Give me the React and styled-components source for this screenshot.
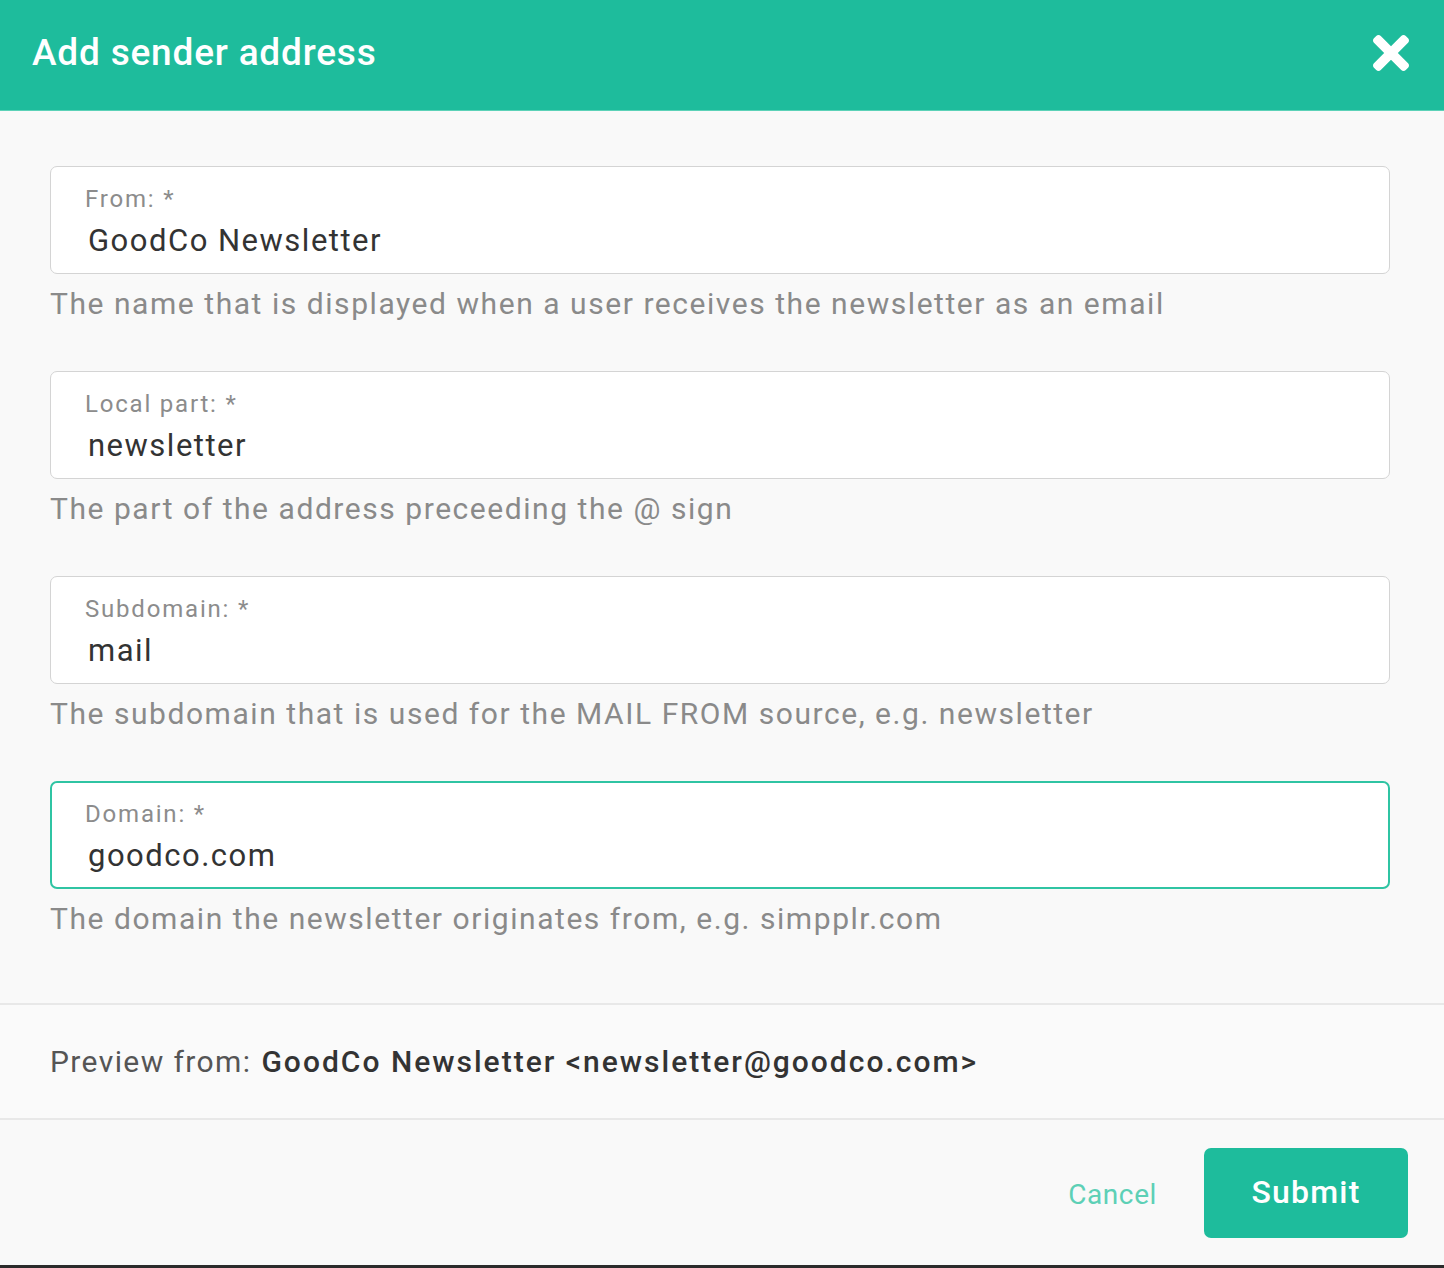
import React from "react";
import styled, { createGlobalStyle, css } from "styled-components";

const GlobalStyle = createGlobalStyle`
  html, body {
    margin: 0;
    padding: 0;
    background: #2b2b2b;
  }
  body {
    font-family: Roboto, "Liberation Sans", Arial, sans-serif;
  }
  * {
    box-sizing: border-box;
  }
`;

const Modal = styled.div`
  width: 1444px;
  height: 1265px;
  background: #f9f9f9;
  display: flex;
  flex-direction: column;
`;

const Header = styled.header`
  height: 111px;
  background: #1ebc9c;
  border-bottom: 1px solid #5cd2b8;
  display: flex;
  align-items: center;
  justify-content: space-between;
  padding: 0 34px 0 32px;
`;

const Title = styled.h2`
  margin: 0;
  color: #fff;
  font-size: 37px;
  font-weight: 500;
  letter-spacing: 0.8px;
  margin-top: -5px;
`;

const CloseButton = styled.button`
  border: none;
  background: none;
  padding: 0;
  width: 38px;
  height: 38px;
  display: flex;
  align-items: center;
  justify-content: center;
  cursor: pointer;
  margin-top: -4px;
`;

const Body = styled.div`
  padding: 55px 54px 64px 50px;
  display: flex;
  flex-direction: column;
  gap: 47px;
`;

const Field = styled.div`
  display: flex;
  flex-direction: column;
`;

const InputBox = styled.label`
  height: 108px;
  background: #fff;
  border: 1px solid #d4d4d4;
  border-radius: 7px;
  padding: 17px 34px 0 34px;
  display: flex;
  flex-direction: column;
  ${(props) =>
    props.focused &&
    css`
      border: 2px solid #2fc4a3;
      padding: 16px 33px 0 33px;
    `};
`;

const Label = styled.span`
  font-size: 24px;
  line-height: 30px;
  letter-spacing: 1.8px;
  color: #8c8c8c;
`;

const Input = styled.input`
  border: none;
  outline: none;
  padding: 0 0 0 3px;
  margin-top: 7px;
  background: transparent;
  font-family: inherit;
  font-size: 31px;
  line-height: 40px;
  height: 40px;
  letter-spacing: 1.5px;
  color: #333;
`;

const Help = styled.p`
  margin: 10px 0 0;
  font-size: 30px;
  line-height: 40px;
  letter-spacing: 1.55px;
  color: #8a8a8a;
`;

const Preview = styled.div`
  height: 117px;
  border-top: 2px solid #e8e8e8;
  border-bottom: 2px solid #e8e8e8;
  display: flex;
  align-items: center;
  padding: 0 50px;
  font-size: 30px;
  letter-spacing: 1.4px;
  color: #555;
  background: #fafafa;
`;

const PreviewValue = styled.strong`
  font-weight: 500;
  color: #333;
  letter-spacing: 2px;
  margin-left: 10px;
`;

const Footer = styled.footer`
  flex: 1;
  display: flex;
  align-items: center;
  justify-content: flex-end;
  gap: 47px;
  padding: 0 36px 0 50px;
`;

const CancelButton = styled.button`
  border: none;
  background: none;
  padding: 0;
  font-family: inherit;
  font-size: 28px;
  letter-spacing: 0.6px;
  color: #5dd0b6;
  cursor: pointer;
  margin-top: 4px;
`;

const SubmitButton = styled.button`
  width: 204px;
  height: 90px;
  border: none;
  border-radius: 7px;
  background: #1ebc9c;
  color: #fff;
  font-family: inherit;
  font-size: 32px;
  font-weight: 500;
  letter-spacing: 1.2px;
  cursor: pointer;
  padding-bottom: 2px;
`;

const CloseIcon = () => (
  <svg width="36" height="36" viewBox="0 80 352 352" fill="#fff">
    <path d="M242.72 256l100.07-100.07c12.28-12.28 12.28-32.19 0-44.48l-22.24-22.24c-12.28-12.28-32.19-12.28-44.48 0L176 189.28 75.93 89.21c-12.28-12.28-32.19-12.28-44.48 0L9.21 111.45c-12.28 12.28-12.28 32.19 0 44.48L109.28 256 9.21 356.07c-12.28 12.28-12.28 32.19 0 44.480l22.24 22.24c12.28 12.28 32.2 12.28 44.48 0L176 322.72l100.07 100.07c12.28 12.28 32.2 12.28 44.48 0l22.24-22.24c12.28-12.28 12.28-32.19 0-44.48L242.72 256z" />
  </svg>
);

const fields = [
  {
    label: "From: *",
    value: "GoodCo Newsletter",
    help: "The name that is displayed when a user receives the newsletter as an email",
  },
  {
    label: "Local part: *",
    value: "newsletter",
    help: "The part of the address preceeding the @ sign",
  },
  {
    label: "Subdomain: *",
    value: "mail",
    help: "The subdomain that is used for the MAIL FROM source, e.g. newsletter",
  },
  {
    label: "Domain: *",
    value: "goodco.com",
    help: "The domain the newsletter originates from, e.g. simpplr.com",
    focused: true,
  },
];

const App = () => {
  return (
    <>
      <GlobalStyle />
      <Modal>
        <Header>
          <Title>Add sender address</Title>
          <CloseButton aria-label="Close">
            <CloseIcon />
          </CloseButton>
        </Header>
        <Body>
          {fields.map((f) => (
            <Field key={f.label}>
              <InputBox focused={f.focused}>
                <Label>{f.label}</Label>
                <Input defaultValue={f.value} />
              </InputBox>
              <Help>{f.help}</Help>
            </Field>
          ))}
        </Body>
        <Preview>
          Preview from:
          <PreviewValue>GoodCo Newsletter &lt;newsletter@goodco.com&gt;</PreviewValue>
        </Preview>
        <Footer>
          <CancelButton>Cancel</CancelButton>
          <SubmitButton>Submit</SubmitButton>
        </Footer>
      </Modal>
    </>
  );
};

export default App;
